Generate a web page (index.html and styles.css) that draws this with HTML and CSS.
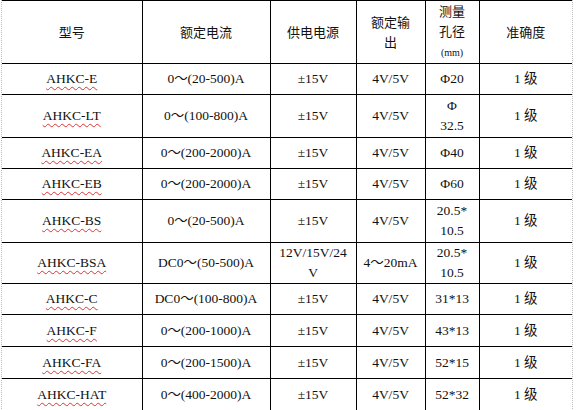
FILE: index.html
```html
<!DOCTYPE html>
<html lang="zh">
<head>
<meta charset="utf-8">
<link rel="stylesheet" href="styles.css">
</head>
<body>
<div class="sheet">
<table class="spec">
  <colgroup>
    <col class="c1"><col class="c2"><col class="c3"><col class="c4"><col class="c5"><col class="c6">
  </colgroup>
  <thead>
    <tr class="h-head">
      <th>型号</th>
      <th>额定电流</th>
      <th>供电电源</th>
      <th>额定输<br>出</th>
      <th>测量<br>孔径<br><span class="unit">(mm)</span></th>
      <th>准确度</th>
    </tr>
  </thead>
  <tbody>
    <tr class="h31"><td><span class="model">AHKC-E</span></td><td>0～(20-500)A</td><td>±15V</td><td>4V/5V</td><td>Φ20</td><td>1 级</td></tr>
    <tr class="h43"><td><span class="model">AHKC-LT</span></td><td>0～(100-800)A</td><td>±15V</td><td>4V/5V</td><td>Φ<br>32.5</td><td>1 级</td></tr>
    <tr class="h31"><td><span class="model">AHKC-EA</span></td><td>0～(200-2000)A</td><td>±15V</td><td>4V/5V</td><td>Φ40</td><td>1 级</td></tr>
    <tr class="h31"><td><span class="model">AHKC-EB</span></td><td>0～(200-2000)A</td><td>±15V</td><td>4V/5V</td><td>Φ60</td><td>1 级</td></tr>
    <tr class="h43"><td><span class="model">AHKC-BS</span></td><td>0～(20-500)A</td><td>±15V</td><td>4V/5V</td><td>20.5*<br>10.5</td><td>1 级</td></tr>
    <tr class="h41"><td><span class="model">AHKC-BSA</span></td><td>DC0～(50-500)A</td><td>12V/15V/24<br>V</td><td>4～20mA</td><td>20.5*<br>10.5</td><td>1 级</td></tr>
    <tr class="h31"><td><span class="model">AHKC-C</span></td><td>DC0～(100-800)A</td><td>±15V</td><td>4V/5V</td><td>31*13</td><td>1 级</td></tr>
    <tr class="h32"><td><span class="model">AHKC-F</span></td><td>0～(200-1000)A</td><td>±15V</td><td>4V/5V</td><td>43*13</td><td>1 级</td></tr>
    <tr class="h32"><td><span class="model">AHKC-FA</span></td><td>0～(200-1500)A</td><td>±15V</td><td>4V/5V</td><td>52*15</td><td>1 级</td></tr>
    <tr class="h32"><td><span class="model">AHKC-HAT</span></td><td>0～(400-2000)A</td><td>±15V</td><td>4V/5V</td><td>52*32</td><td>1 级</td></tr>
  </tbody>
</table>
</div>
</body>
</html>
```
FILE: styles.css
```css
html, body {
  margin: 0;
  padding: 0;
  background: #fff;
}
body {
  width: 578px;
  height: 410px;
  overflow: hidden;
}
.sheet {
  margin-left: 1px;
  width: 570px;
  border-left: 1px dotted #bdbdbd;
  border-right: 1px dotted #bdbdbd;
}
.spec {
  width: 570px;
  table-layout: fixed;
  border-collapse: collapse;
  color: #111;
}
.c1 { width: 140px; }
.c2 { width: 128px; }
.c3 { width: 86px; }
.c4 { width: 69px; }
.c5 { width: 54px; }
.c6 { width: 93px; }
.spec th,
.spec td {
  border: 1px solid #000;
  padding: 0 2px;
  text-align: center;
  vertical-align: middle;
  line-height: 20px;
  white-space: nowrap;
}
.spec tr > :first-child { border-left: none; }
.spec tr > :last-child { border-right: none; }
.spec th {
  font-family: "Noto Sans CJK SC", "DejaVu Sans", sans-serif;
  font-weight: normal;
  font-size: 13px;
}
.spec td {
  font-family: "Liberation Serif", "Noto Sans CJK SC", serif;
  font-size: 13.5px;
}
.unit {
  font-family: "Liberation Serif", serif;
  font-size: 10px;
}
.model {
  text-decoration: underline wavy #d33;
  text-decoration-thickness: 1px;
  text-underline-offset: 3px;
}
.h-head { height: 63px; }
.h31 { height: 31px; }
.h32 { height: 32px; }
.h41 { height: 41px; }
.h43 { height: 43px; }
```
